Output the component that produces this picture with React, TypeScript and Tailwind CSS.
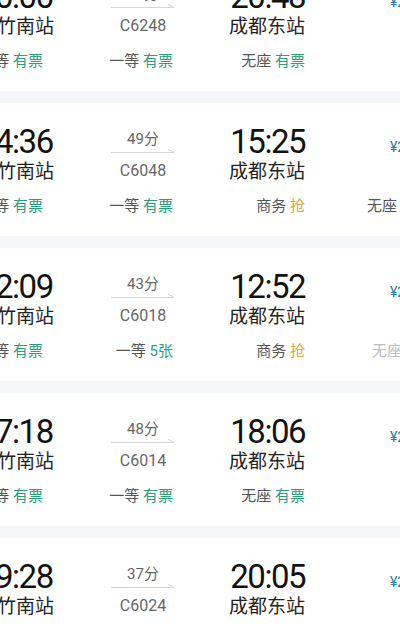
type Seat = { label: string; status: string; tone: 'green' | 'orange' | 'gray' | 'dim' };

type Train = {
  dep: string;
  arr: string;
  dur: string;
  no: string;
  seats: Seat[];
  extra?: Seat;
};

const trains: Train[] = [
  {
    dep: '20:00',
    arr: '20:48',
    dur: '48分',
    no: 'C6248',
    seats: [
      { label: '二等', status: '有票', tone: 'green' },
      { label: '一等', status: '有票', tone: 'green' },
      { label: '无座', status: '有票', tone: 'green' },
    ],
  },
  {
    dep: '14:36',
    arr: '15:25',
    dur: '49分',
    no: 'C6048',
    seats: [
      { label: '二等', status: '有票', tone: 'green' },
      { label: '一等', status: '有票', tone: 'green' },
      { label: '商务', status: '抢', tone: 'orange' },
    ],
    extra: { label: '无座', status: '有票', tone: 'green' },
  },
  {
    dep: '12:09',
    arr: '12:52',
    dur: '43分',
    no: 'C6018',
    seats: [
      { label: '二等', status: '有票', tone: 'green' },
      { label: '一等', status: '5张', tone: 'green' },
      { label: '商务', status: '抢', tone: 'orange' },
    ],
    extra: { label: '无座', status: '无票', tone: 'dim' },
  },
  {
    dep: '17:18',
    arr: '18:06',
    dur: '48分',
    no: 'C6014',
    seats: [
      { label: '二等', status: '有票', tone: 'green' },
      { label: '一等', status: '有票', tone: 'green' },
      { label: '无座', status: '有票', tone: 'green' },
    ],
  },
  {
    dep: '19:28',
    arr: '20:05',
    dur: '37分',
    no: 'C6024',
    seats: [
      { label: '二等', status: '有票', tone: 'green' },
      { label: '一等', status: '有票', tone: 'green' },
      { label: '无座', status: '有票', tone: 'green' },
    ],
  },
];

function statusClass(tone: Seat['tone']) {
  if (tone === 'green') return 'text-[#2c9c7c]';
  if (tone === 'orange') return 'text-[#e2a43c]';
  if (tone === 'dim') return 'text-[#bdbdbd]';
  return 'text-[#666]';
}

function SeatText({ seat }: { seat: Seat }) {
  const dim = seat.tone === 'dim';
  return (
    <span className="whitespace-nowrap">
      <span className={dim ? 'text-[#bdbdbd]' : 'text-[#555]'}>{seat.label}</span>{' '}
      <span className={statusClass(seat.tone)}>{seat.status}</span>
    </span>
  );
}

function Arrow() {
  return (
    <svg width="64" height="6" viewBox="0 0 64 6" className="block">
      <path d="M0 5.5 H63 M57 2.2 L63 5.5" stroke="#d6d6d6" strokeWidth="1" fill="none" />
    </svg>
  );
}

function TrainCard({ t }: { t: Train }) {
  return (
    <div className="h-[133px] shrink-0 bg-white pt-[22px]">
      {/* top row: times, stations, duration */}
      <div className="ml-[-22px] flex h-[56px] items-start">
        <div className="w-[110px] shrink-0">
          <div className="text-[33px] leading-[33px] tracking-[-1.5px] text-[#121212]">{t.dep}</div>
          <div className="mt-[4px] text-[19px] leading-[19px] text-[#222]">绵竹南站</div>
        </div>
        <div className="flex w-[110px] shrink-0 flex-col items-center pt-[7px]">
          <div className="text-[15px] leading-[15px] text-[#666]">{t.dur}</div>
          <Arrow />
          <div className="mt-[10px] text-[16px] leading-[16px] text-[#666]">{t.no}</div>
        </div>
        <div className="w-[107px] shrink-0 text-right">
          <div className="text-[33px] leading-[33px] tracking-[-1.5px] text-[#121212]">{t.arr}</div>
          <div className="mt-[4px] text-[19px] leading-[19px] text-[#222]">成都东站</div>
        </div>
        <div className="ml-[85px] shrink-0 pt-[15px] text-[14px] leading-[14px] whitespace-nowrap text-[#2a7d9c]">
          ¥26.5
        </div>
      </div>
      {/* seats row */}
      <div className="ml-[-22px] mt-[18px] flex text-[15px] leading-[15px]">
        <div className="w-[65px] shrink-0 text-right">
          <SeatText seat={t.seats[0]} />
        </div>
        <div className="w-[130px] shrink-0 text-right">
          <SeatText seat={t.seats[1]} />
        </div>
        <div className="w-[132px] shrink-0 text-right">
          <SeatText seat={t.seats[2]} />
        </div>
        {t.extra && (
          <div className={t.extra.tone === 'dim' ? 'ml-[67px] shrink-0' : 'ml-[62px] shrink-0'}>
            <SeatText seat={t.extra} />
          </div>
        )}
      </div>
    </div>
  );
}

export default function App() {
  return (
    <div
      className="h-[630px] w-[400px] overflow-hidden bg-[#f4f6f9]"
      style={{ fontFamily: 'Roboto, "Noto Sans CJK SC", sans-serif' }}
    >
      <div className="mt-[-42px] flex flex-col gap-[12px]">
        {trains.map((t) => (
          <TrainCard key={t.no} t={t} />
        ))}
      </div>
    </div>
  );
}
